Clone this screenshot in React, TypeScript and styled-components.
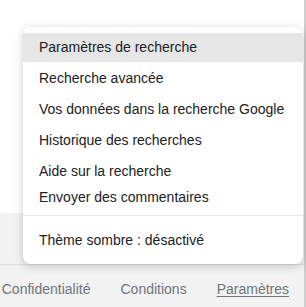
import React from 'react';
import styled, { createGlobalStyle } from 'styled-components';

const GlobalStyle = createGlobalStyle`
  html, body {
    margin: 0;
    padding: 0;
    background: #fff;
    font-family: "Liberation Sans", Arial, sans-serif;
    overflow: hidden;
  }
`;

const Page = styled.div`
  display: flex;
  width: 306px;
  height: 307px;
`;

const Main = styled.div`
  position: relative;
  flex: 1;
  min-width: 0;
  display: flex;
  flex-direction: column;
`;

const Strip = styled.div`
  flex: 0 0 2px;
  background: #cdcdcd;
`;

const Content = styled.div`
  height: 213px;
  background: #fff;
`;

const Footer = styled.footer`
  flex: 1;
  display: flex;
  flex-direction: column;
  background: #f2f2f2;
`;

const CountryRow = styled.div`
  height: 51px;
  border-bottom: 1px solid #dadce0;
`;

const LinksRow = styled.div`
  flex: 1;
  display: flex;
  justify-content: flex-end;
  align-items: flex-start;
  padding-top: 15px;
  overflow: hidden;
`;

const FooterLink = styled.a<{ $active?: boolean }>`
  flex: none;
  padding: 0 15px;
  font-size: 14px;
  line-height: 18px;
  color: #70757a;
  white-space: nowrap;
  text-decoration: ${(p) => (p.$active ? 'underline' : 'none')};
  text-underline-offset: 2px;
`;

const Menu = styled.div`
  position: absolute;
  left: 23px;
  top: 27px;
  width: 280px;
  padding: 6px 0 9px;
  background: #fff;
  border-radius: 8px;
  box-shadow: 0 2px 10px 0 rgba(0, 0, 0, 0.2);
  display: flex;
  flex-direction: column;
`;

const Item = styled.div<{ $active?: boolean; $h?: number; $gap?: number }>`
  height: ${(p) => p.$h ?? 29}px;
  line-height: ${(p) => p.$h ?? 29}px;
  margin-bottom: ${(p) => p.$gap ?? 0}px;
  padding-left: 16px;
  font-size: 14px;
  color: #202124;
  background: ${(p) => (p.$active ? '#e6e6e6' : 'transparent')};
  white-space: nowrap;
`;

const Divider = styled.div`
  height: 1px;
  margin: 7px 0 10px;
  background: #e8e8e8;
`;

export default function App() {
  return (
    <>
      <GlobalStyle />
      <Page>
        <Main>
          <Content />
          <Footer>
            <CountryRow />
            <LinksRow>
              <FooterLink>Confidentialité</FooterLink>
              <FooterLink>Conditions</FooterLink>
              <FooterLink $active>Paramètres</FooterLink>
            </LinksRow>
          </Footer>
          <Menu>
            <Item $active $gap={2}>Paramètres de recherche</Item>
            <Item $gap={2}>Recherche avancée</Item>
            <Item $gap={2}>Vos données dans la recherche Google</Item>
            <Item $gap={2}>Historique des recherches</Item>
            <Item>Aide sur la recherche</Item>
            <Item $h={22}>Envoyer des commentaires</Item>
            <Divider />
            <Item>Thème sombre : désactivé</Item>
          </Menu>
        </Main>
        <Strip />
      </Page>
    </>
  );
}
